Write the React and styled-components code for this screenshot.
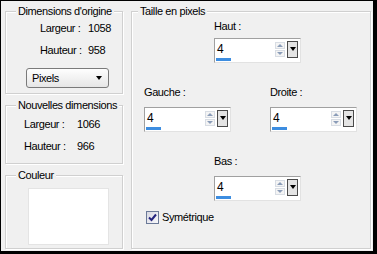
import React from "react"
import styled, { createGlobalStyle } from "styled-components"

const Global = createGlobalStyle`
  html, body { margin: 0; padding: 0; background: #000; }
`

const Frame = styled.div`
  width: 377px;
  height: 254px;
  box-sizing: border-box;
  border-style: solid;
  border-color: #000;
  border-width: 1px 4px 3px 1px;
  background: #f0f0f0;
  display: flex;
  gap: 8px;
  padding: 4px 2px 2px 4px;
  font-family: "Liberation Sans", Arial, sans-serif;
  font-size: 11px;
  letter-spacing: -0.4px;
  color: #000;
`

const LeftColumn = styled.div`
  width: 118px;
  display: flex;
  flex-direction: column;
  gap: 5px;
`

const Group = styled.fieldset`
  margin: 0;
  padding: 0;
  min-width: 0;
  box-sizing: border-box;
  width: ${p => p.$width || 118}px;
  height: ${p => p.$height}px;
  border: 1px solid #d0d0d0;
  box-shadow: inset 1px 1px 0 #fff, 1px 1px 0 #fff;
`

const Legend = styled.legend`
  margin-left: ${p => p.$offset || 10}px;
  padding: 0 2px;
  line-height: 13px;
  background: #f0f0f0;
`

const GroupBody = styled.div`
  display: flex;
  flex-direction: column;
  align-items: flex-start;
  padding: ${p => p.$pad || 0}px 0 0 ${p => p.$left || 0}px;
`

const InfoRow = styled.div`
  display: flex;
  line-height: 13px;
  height: 13px;
  margin-top: ${p => p.$top || 0}px;
`

const InfoLabel = styled.span`
  width: ${p => p.$width}px;
`

const Select = styled.div`
  margin-top: 11px;
  margin-left: -14px;
  width: 83px;
  height: 20px;
  box-sizing: border-box;
  border: 1px solid #7a7a7a;
  border-radius: 3px;
  background: linear-gradient(#fefefe, #e6e6e6);
  display: flex;
  align-items: center;
  justify-content: space-between;
  padding: 0 6px 0 5px;
`

const Caret = styled.span`
  width: 0;
  height: 0;
  border-left: 3.5px solid transparent;
  border-right: 3.5px solid transparent;
  border-top: 4px solid #000;
`

const Swatch = styled.div`
  width: 81px;
  height: 57px;
  background: #fff;
  border: 1px solid #e4e4e4;
  box-sizing: border-box;
`

const PixelBody = styled.div`
  display: flex;
  flex-direction: column;
  padding-top: 2px;
`

const FieldRow = styled.div`
  display: flex;
  gap: 39px;
  margin-top: ${p => p.$top || 0}px;
  padding-left: ${p => p.$left || 0}px;
`

const Field = styled.div`
  display: flex;
  flex-direction: column;
`

const FieldLabel = styled.div`
  line-height: 13px;
  height: 13px;
  margin-bottom: ${p => p.$gap || 8}px;
`

const SpinFrame = styled.div`
  width: 87px;
  height: 25px;
  box-sizing: border-box;
  border-style: solid;
  border-width: 1px;
  border-color: #a0a0a0 #e2e2e2 #e2e2e2 #a0a0a0;
  background: #fff;
  display: flex;
  flex-direction: column;
`

const SpinTop = styled.div`
  display: flex;
  align-items: center;
  height: 18px;
  padding-top: 1px;
`

const SpinValue = styled.div`
  flex: 1;
  padding-left: 2px;
  font-size: 12px;
  line-height: 16px;
`

const Arrows = styled.div`
  width: 10px;
  display: flex;
  flex-direction: column;
  gap: 1px;
  margin-right: 2px;
`

const ArrowBtn = styled.div`
  height: 7px;
  background: #f4f4f4;
  border: 1px solid #d8dde4;
  box-sizing: border-box;
  display: flex;
  align-items: center;
  justify-content: center;
`

const Tri = styled.span`
  width: 0;
  height: 0;
  border-left: 3px solid transparent;
  border-right: 3px solid transparent;
  ${p => p.$up ? "border-bottom: 3px solid #8a9cb8;" : "border-top: 3px solid #8a9cb8;"}
`

const DropBtn = styled.div`
  width: 11px;
  height: 17px;
  box-sizing: border-box;
  border: 1px solid #4a4a4a;
  background: #e4e4e4;
  margin-right: 2px;
  display: flex;
  align-items: center;
  justify-content: center;
`

const SpinTrack = styled.div`
  flex: 1;
  display: flex;
  align-items: flex-end;
  padding: 0 0 1px 1px;
`

const Bar = styled.div`
  width: 15px;
  height: 3px;
  background: #3d8de0;
`

const CheckRow = styled.div`
  display: flex;
  align-items: center;
  gap: 3px;
  margin-top: 10px;
  padding-left: 14px;
  line-height: 13px;
`

const CheckBox = styled.div`
  width: 13px;
  height: 13px;
  box-sizing: border-box;
  border: 1px solid #6b7a98;
  background: linear-gradient(135deg, #d8d8e2, #f8f8fb);
  display: flex;
  align-items: center;
  justify-content: center;
`

function Spin({ label, gap }) {
  return (
    <Field>
      <FieldLabel $gap={gap}>{label}</FieldLabel>
      <SpinFrame>
        <SpinTop>
          <SpinValue>4</SpinValue>
          <Arrows>
            <ArrowBtn><Tri $up /></ArrowBtn>
            <ArrowBtn><Tri /></ArrowBtn>
          </Arrows>
          <DropBtn><Caret /></DropBtn>
        </SpinTop>
        <SpinTrack><Bar /></SpinTrack>
      </SpinFrame>
    </Field>
  )
}

export default function App() {
  return (
    <>
      <Global />
      <Frame>
        <LeftColumn>
          <Group $height={89}>
            <Legend>Dimensions d'origine</Legend>
            <GroupBody $pad={4} $left={34}>
              <InfoRow><InfoLabel $width={48}>Largeur :</InfoLabel>1058</InfoRow>
              <InfoRow $top={9}><InfoLabel $width={48}>Hauteur :</InfoLabel>958</InfoRow>
              <Select>Pixels<Caret /></Select>
            </GroupBody>
          </Group>
          <Group $height={65}>
            <Legend>Nouvelles dimensions</Legend>
            <GroupBody $pad={6} $left={18}>
              <InfoRow><InfoLabel $width={53}>Largeur :</InfoLabel>1066</InfoRow>
              <InfoRow $top={9}><InfoLabel $width={53}>Hauteur :</InfoLabel>966</InfoRow>
            </GroupBody>
          </Group>
          <Group $height={80}>
            <Legend>Couleur</Legend>
            <GroupBody $pad={6} $left={22}>
              <Swatch />
            </GroupBody>
          </Group>
        </LeftColumn>
        <Group $width={240} $height={244}>
          <Legend $offset={6}>Taille en pixels</Legend>
          <PixelBody>
            <FieldRow $left={82}>
              <Spin label="Haut :" gap={5} />
            </FieldRow>
            <FieldRow $top={23} $left={12}>
              <Spin label="Gauche :" />
              <Spin label="Droite :" />
            </FieldRow>
            <FieldRow $top={23} $left={82}>
              <Spin label="Bas :" />
            </FieldRow>
            <CheckRow>
              <CheckBox>
                <svg width="9" height="9" viewBox="0 0 9 9">
                  <polyline points="1,4.5 3.5,7 8,1.5" fill="none" stroke="#23237e" strokeWidth="2" />
                </svg>
              </CheckBox>
              Symétrique
            </CheckRow>
          </PixelBody>
        </Group>
      </Frame>
    </>
  )
}
